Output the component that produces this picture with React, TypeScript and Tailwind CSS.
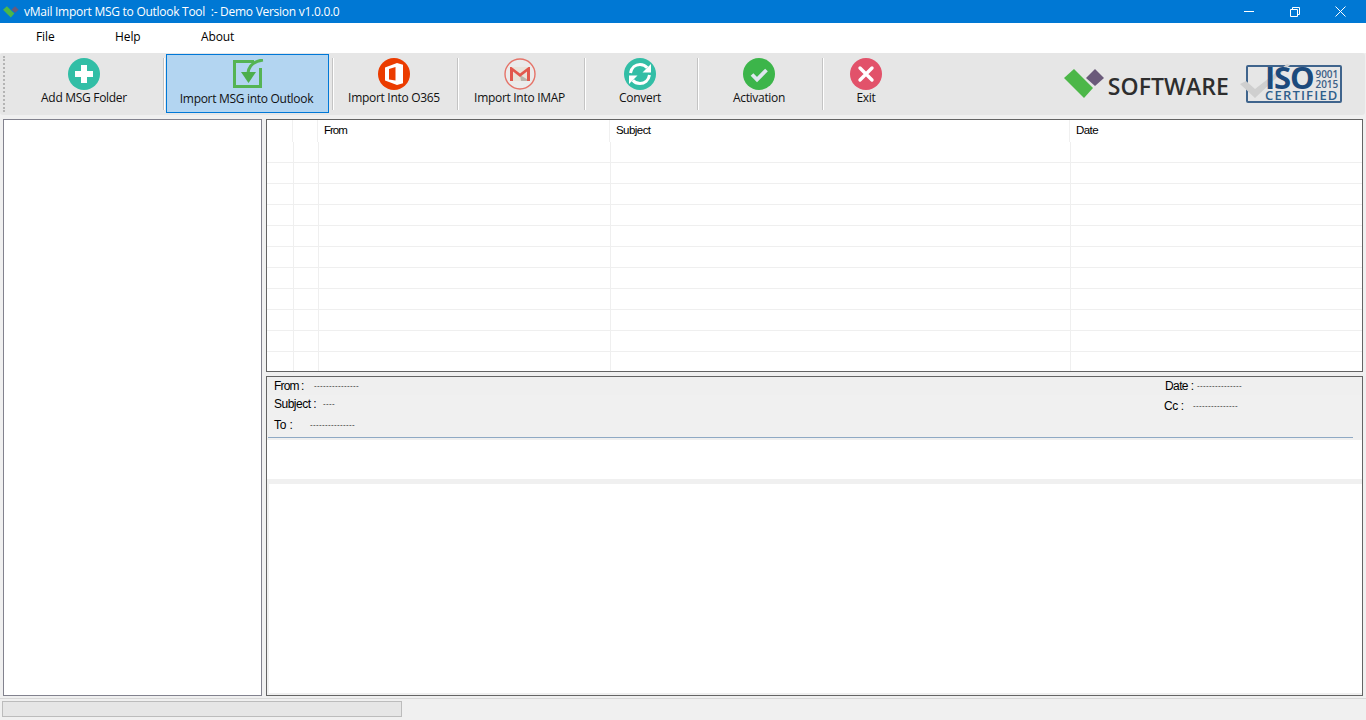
const ui = "font-['Open_Sans','Noto_Sans',sans-serif]";
const ms = "font-['Liberation_Sans',Arial,sans-serif]";

function AddIcon() {
  return (
    <svg width="32" height="32" viewBox="0 0 32 32">
      <circle cx="16" cy="16" r="16" fill="#32bea6" />
      <path d="M13 7h6v6h6v6h-6v6h-6v-6H7v-6h6z" fill="#fff" />
    </svg>
  );
}

function ImportIcon() {
  return (
    <svg width="32" height="32" viewBox="0 0 32 32">
      <path d="M22 2.500H2.500V27.500H28.500V9" fill="none" stroke="#55b454" strokeWidth="3" />
      <path d="M31 1C23 2 17 5 16 14" fill="none" stroke="#55b454" strokeWidth="3" />
      <path d="M9 13h15L16.500 24z" fill="#4cae4c" />
    </svg>
  );
}

function OfficeIcon() {
  return (
    <svg width="32" height="32" viewBox="0 0 32 32">
      <circle cx="16" cy="16" r="16" fill="#eb3c00" />
      <path d="M19 5 7 9.500V22.500L19 27l6-1.700V6.700z" fill="#fff" />
      <path d="M17.500 9 11 11v10.500l6.500 1z" fill="#eb3c00" />
    </svg>
  );
}

function GmailIcon() {
  return (
    <svg width="32" height="32" viewBox="0 0 32 32">
      <circle cx="16" cy="16" r="15" fill="#ebebeb" stroke="#e57368" strokeWidth="1.400" />
      <path d="M6 9h20v14H6z" fill="#e8e3da" />
      <path d="M16 17 26 23H17z" fill="#b9b3aa" />
      <path d="M6 9v14h3V13.500l7 5.500 7-5.500V23h3V9h-1.500L16 15.500 7.500 9z" fill="#e2584d" />
    </svg>
  );
}

function ConvertIcon() {
  return (
    <svg width="32" height="32" viewBox="0 0 32 32">
      <circle cx="16" cy="16" r="16" fill="#32bea6" />
      <path d="M6.500 15C7.500 9.500 11.500 6.500 16 6.500c3 0 5.500 1.200 7.200 3.300" fill="none" stroke="#fff" strokeWidth="3" />
      <path d="M27 6v8.500h-8.500z" fill="#fff" />
      <path d="M25.500 17C24.500 22.500 20.500 25.500 16 25.500c-3 0-5.500-1.200-7.200-3.300" fill="none" stroke="#fff" strokeWidth="3" />
      <path d="M5 26v-8.500h8.500z" fill="#fff" />
    </svg>
  );
}

function CheckIcon() {
  return (
    <svg width="32" height="32" viewBox="0 0 32 32">
      <circle cx="16" cy="16" r="16" fill="#3cb54a" />
      <path d="M9 16.500l5 5L23.500 12" fill="none" stroke="#dde6ee" strokeWidth="3.800" />
    </svg>
  );
}

function ExitIcon() {
  return (
    <svg width="32" height="32" viewBox="0 0 32 32">
      <circle cx="16" cy="16" r="16" fill="#e2526a" />
      <path d="M10 10l12 12M22 10 10 22" fill="none" stroke="#fff" strokeWidth="3.400" strokeLinecap="round" />
    </svg>
  );
}

function LogoMark({ w, h }: { w: number; h: number }) {
  return (
    <svg width={w} height={h} viewBox="0 0 41 30">
      <path d="M0 9 10 0 29 19 20 29z" fill="#4cb748" />
      <path d="M22 9 31 0 40 9 31 17z" fill="#6a5a7a" />
    </svg>
  );
}

const tools = [
  { label: "Add MSG Folder", icon: <AddIcon />, w: "w-[157px] pr-[1px]" },
  { label: "Import MSG into Outlook", icon: <ImportIcon />, w: "w-[167px]", active: true },
  { label: "Import Into O365", icon: <OfficeIcon />, w: "w-[123px] pr-[3px]" },
  { label: "Import Into IMAP", icon: <GmailIcon />, w: "w-[125px] pr-[4px]" },
  { label: "Convert", icon: <ConvertIcon />, w: "w-[111px] pr-[3px]" },
  { label: "Activation", icon: <CheckIcon />, w: "w-[123px] pr-[3px]" },
  { label: "Exit", icon: <ExitIcon />, w: "w-[86px] pr-[2px]" },
];

function Toolbar() {
  return (
    <div className="h-[62px] mr-px flex items-stretch bg-[#e6e6e6] rounded-[3px]">
      <div className="w-[6px] py-[3px] pl-[3px]">
        <div className="h-full w-[2px] border-l-2 border-dotted border-[#b4b4b4]" />
      </div>
      {tools.map((t, i) => (
        <div key={t.label} className="flex items-stretch">
          <div className={`${t.w} flex items-stretch justify-center`}>
            <div
              className={
                t.active
                  ? "w-[163px] ml-px mr-[3px] mt-px mb-[2px] flex flex-col items-center pt-[4px] bg-[#b3d5f1] border border-[#0078d7]"
                  : "w-full flex flex-col items-center pt-[5px]"
              }
            >
              {t.icon}
              <span className={`${ui} ${t.active ? "ml-[-2px]" : ""} mt-[-1px] text-[12px] leading-[17px] text-[#111] whitespace-nowrap tracking-[-0.3px]`}>{t.label}</span>
            </div>
          </div>
          {i < tools.length - 1 && (
            <div className="my-[5px] w-[2px] bg-[#c4c4c4] border-r border-white" />
          )}
        </div>
      ))}
      <div className="ml-auto mr-[23px] flex items-center gap-[17px]">
        <div className="flex items-center gap-[3px]">
          <LogoMark w={41} h={30} />
          <span className="font-['Open_Sans',sans-serif] font-semibold text-[23px] leading-none text-[#2e2e2e] tracking-[0.1px] mt-[5px]">SOFTWARE</span>
        </div>
        <div className="relative w-[96px] h-[38px] border-2 border-[#3f648c] rounded-[2px] flex flex-col pl-[17px] mt-[-1px]">
          <svg className="absolute left-[-9px] top-[-4px]" width="52" height="36" viewBox="0 0 52 36">
            <path d="M1 21l6-3 9 8L48 1l3 1-35 33z" fill="#cfcfcf" />
          </svg>
          <div className="relative flex items-start gap-[2px] h-[24px]">
            <span className="block mt-[-2px] font-['Open_Sans',sans-serif] font-bold text-[31px] leading-[24px] text-[#1c4a7c] tracking-[-1.2px]">ISO</span>
            <span className="block mt-[2px] font-['Open_Sans',sans-serif] font-semibold text-[10px] leading-[10px] text-[#3d5f86]">9001<br />2015</span>
          </div>
          <span className="relative block mt-[-1px] font-['Open_Sans',sans-serif] font-semibold text-[13px] leading-[11px] text-[#2f5f8c] tracking-[1.2px]">CERTIFIED</span>
        </div>
      </div>
    </div>
  );
}

const rowCols = "grid grid-cols-[27px_25px_292px_460px_1fr]";
const headCols = "grid grid-cols-[26px_25px_292px_460px_1fr]";
const rowHeights = ["h-[21px]", "h-[21px]", "h-[21px]", "h-[21px]", "h-[21px]", "h-[21px]", "h-[21px]", "h-[21px]", "h-[21px]", "h-[21px]", "h-[20px]"];

function MessageGrid() {
  return (
    <div className="h-[253px] bg-white border border-[#646464] overflow-hidden">
      <div className={`${headCols} h-[22px] ${ms} text-[11.500px] text-black tracking-[-0.55px]`}>
        <div className="border-r border-[#f0f0f0]" />
        <div className="border-r border-[#f0f0f0]" />
        <div className="border-r border-[#f0f0f0] pl-[6px] pt-[2px] tracking-[-1px]">From</div>
        <div className="border-r border-[#f0f0f0] pl-[6px] pt-[2px]">Subject</div>
        <div className="pl-[6px] pt-[2px]">Date</div>
      </div>
      {rowHeights.map((h, i) => (
        <div key={i} className={`${rowCols} ${h} ${i < 10 ? "border-b border-[#efefef]" : ""}`}>
          <div className="border-r border-[#efefef]" />
          <div className="border-r border-[#efefef]" />
          <div className="border-r border-[#efefef]" />
          <div className="border-r border-[#efefef]" />
          <div />
        </div>
      ))}
    </div>
  );
}

function Field({ label, value, labelCls, h, className }: { label: string; value: string; labelCls: string; h: string; className?: string }) {
  return (
    <div className={`flex items-center ${h} ${className || ""}`}>
      <span className={`${labelCls} ${ms} text-[12px] text-black whitespace-nowrap`}>{label}</span>
      <span className={`${ms} text-[8px] text-[#222] tracking-[0.33px] whitespace-nowrap`}>{value}</span>
    </div>
  );
}

function Preview() {
  const dash = "---------------";
  return (
    <div className="flex-1 min-h-0 flex flex-col bg-white border border-[#646464]">
      <div className="h-[63px] bg-[#f0f0f0] flex flex-col">
        <div className="flex h-[18px] pl-[7px] bg-[#efefef]">
          <Field label="From :" value={dash} labelCls="w-[40px] tracking-[-0.85px]" h="h-[18px]" />
          <div className="ml-auto w-[197px]">
            <Field label="Date :" value={dash} labelCls="w-[32px] tracking-[-0.6px]" h="h-[18px]" />
          </div>
        </div>
        <div className="flex h-[19px] pl-[7px]">
          <Field label="Subject :" value="----" labelCls="w-[49px] tracking-[-0.5px]" h="h-[18px]" />
          <div className="ml-auto w-[198px] mt-[2px]">
            <Field label="Cc :" value={dash} labelCls="w-[29px] tracking-[-0.4px]" h="h-[18px]" />
          </div>
        </div>
        <Field label="To :" value={dash} labelCls="w-[36px] tracking-[-0.2px]" h="h-[20px]" className="pl-[7px] mt-[1px]" />
        <div className="mt-[2px] ml-px mr-[9px] h-px bg-[#8fa9c4]" />
      </div>
      <div className="h-[39px]" />
      <div className="h-[5px] bg-[#f0f0f0]" />
      <div className="flex-1 border-l-2 border-b-2 border-[#f0f0f0]" />
    </div>
  );
}

export default function App() {
  return (
    <div className="h-[720px] w-[1366px] bg-[#f0f0f0] flex flex-col overflow-hidden">
      <div className={`${ui} h-[23px] bg-[#0078d4] flex items-center text-white`}>
        <div className="ml-[3px] mr-[5px] flex items-center"><LogoMark w={16} h={12} /></div>
        <span className="text-[12px] whitespace-pre tracking-[-0.27px]">vMail Import MSG to Outlook Tool  :- Demo Version v1.0.0.0</span>
        <div className="ml-auto flex items-center">
          <div className="w-[46px] flex justify-center"><div className="w-[10px] h-px bg-white" /></div>
          <div className="w-[46px] flex justify-center">
            <svg width="10" height="10" viewBox="0 0 10 10" fill="none" stroke="#fff">
              <path d="M.5 2.500h7v7h-7zM2.500 2.500V.5h7v7h-2" />
            </svg>
          </div>
          <div className="w-[45px] mr-[3px] flex justify-center">
            <svg width="11" height="11" viewBox="0 0 11 11" fill="none" stroke="#fff">
              <path d="M.5.5l10 10M10.500.5l-10 10" />
            </svg>
          </div>
        </div>
      </div>
      <div className={`${ui} h-[30px] bg-white text-[12px] text-black tracking-[-0.1px]`}>
        <div className="flex items-center h-full pl-[36px] pb-[2px]">
          <span className="w-[79px]">File</span>
          <span className="w-[86px]">Help</span>
          <span>About</span>
        </div>
      </div>
      <Toolbar />
      <div className="flex-1 min-h-0 flex gap-[4px] pl-[3px] pr-[3px] pt-[4px] pb-[2px]">
        <div className="w-[259px] bg-white border border-[#82828e]" />
        <div className="flex-1 min-w-0 flex flex-col gap-[4px]">
          <MessageGrid />
          <Preview />
        </div>
      </div>
      <div className="h-[22px] pl-[2px] pt-[2px] border-t border-[#d8d8d8]">
        <div className="w-[400px] h-[16px] bg-[#e6e6e6] border border-[#bcbcbc]" />
      </div>
    </div>
  );
}
